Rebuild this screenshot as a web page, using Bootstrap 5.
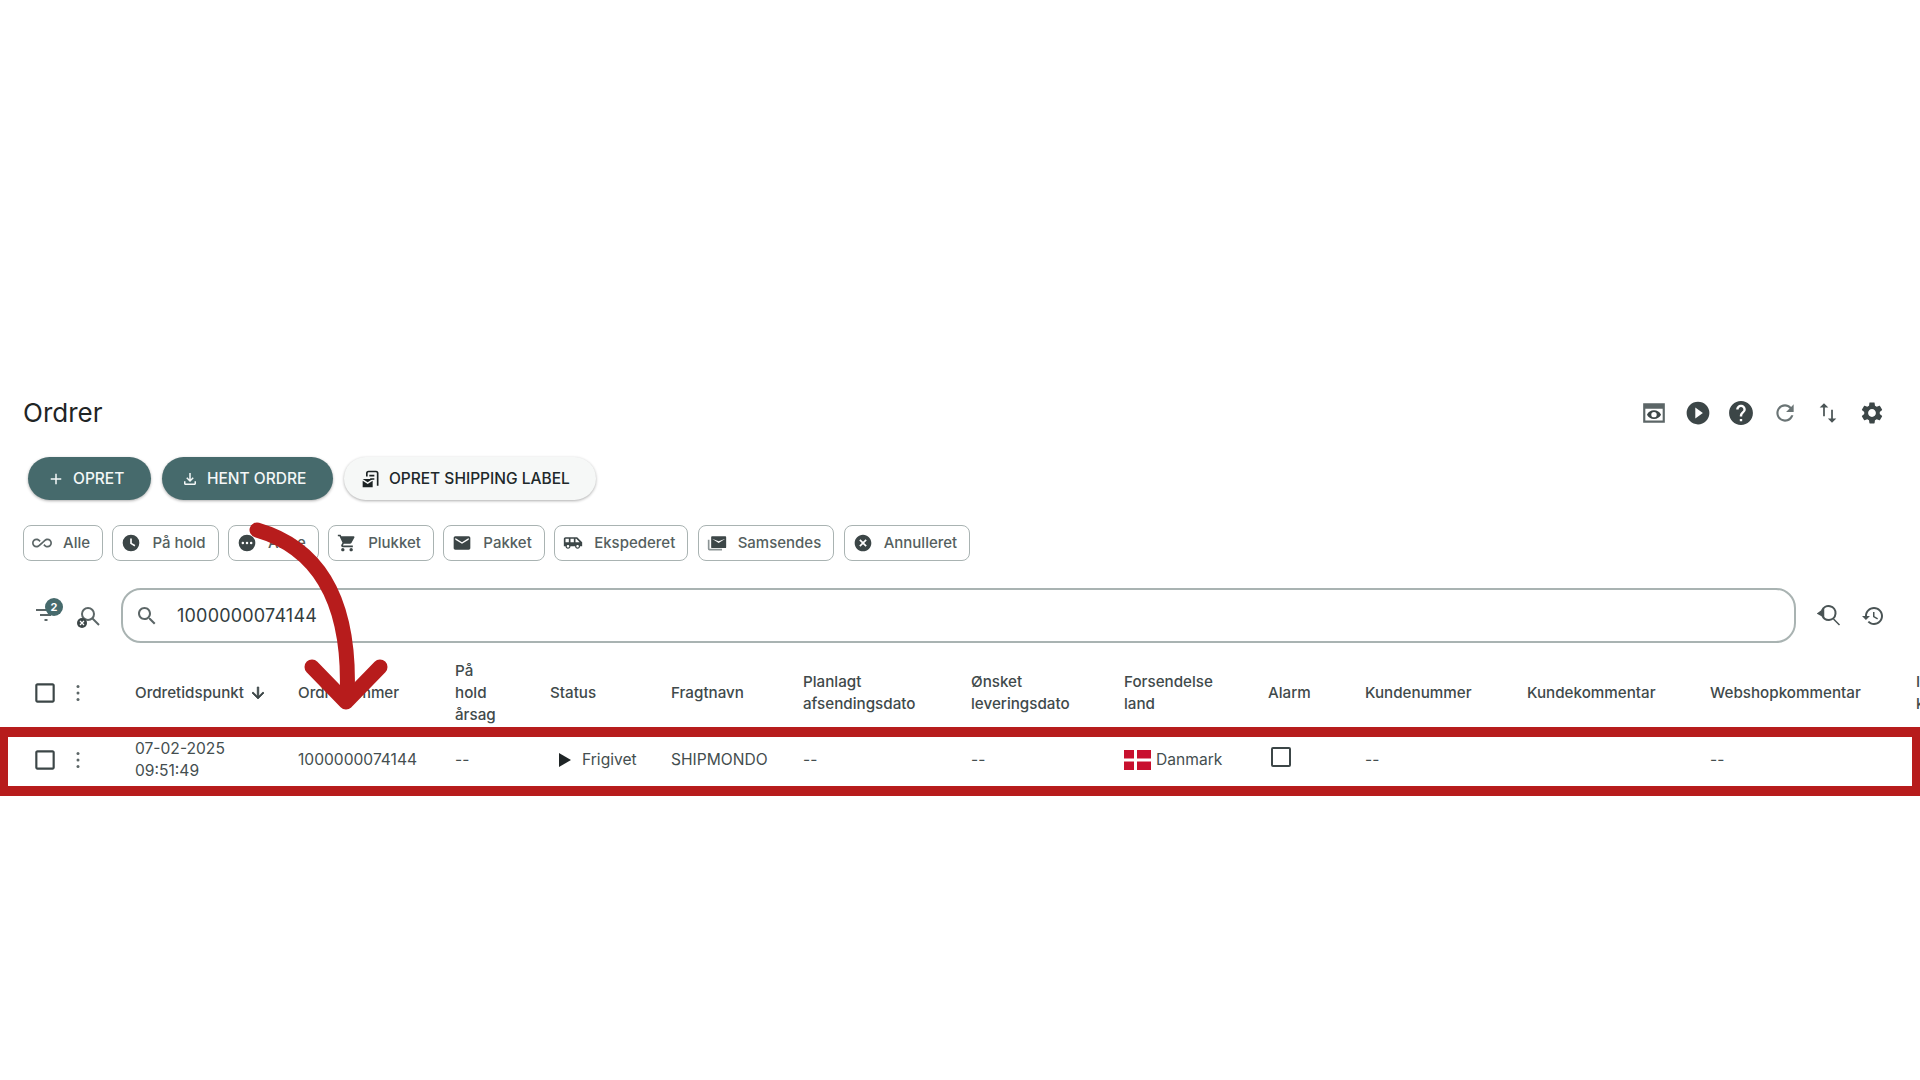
<!DOCTYPE html>
<html lang="da">
<head>
<meta charset="utf-8">
<title>Ordrer</title>
<link href="https://cdn.jsdelivr.net/npm/bootstrap@5.3.0/dist/css/bootstrap.min.css" rel="stylesheet">
<style>
html,body{height:1080px;overflow:hidden;background:#fff}
body{font-family:Inter,"Liberation Sans",sans-serif;font-size:15px;color:#3f4a4b;position:relative}
.ico{display:block;fill:#3c4647;flex:none}
.page-top{height:393px}
.head-row{height:40px;padding:0 35px 0 23px}
.page-title{font-size:26px;font-weight:400;color:#1f2526;margin:0;line-height:40px}
.head-icons{gap:17.6px}
.head-icons .ico{width:26px;height:26px}
.action-row{margin-top:24px;padding-left:28px;gap:10.6px}
.pill{height:43px;border-radius:22px;border:0;font-size:15.5px;font-weight:500;padding:0 27px 0 19px;gap:8px;display:flex;align-items:center;box-shadow:0 1px 3px rgba(0,0,0,.32)}
.pill-teal{background:#466a6c;color:#f4f7f7}
.pill-teal .ico{fill:#f4f7f7}
.pill-light{background:#f6f8f7;color:#20282a;padding:0 26px 0 17px}
.pill-light .ico{fill:#1c2324}
.chip-row{margin-top:25px;padding-left:23px;gap:9.4px}
.chip{height:36px;border:1.5px solid #a9b3b2;border-radius:8px;padding:0 12px 0 8px;gap:11px;display:flex;align-items:center;color:#555f60;font-weight:500;font-size:15px;background:#fff}
.search-row{margin-top:27px;height:55px;padding-left:35px}
.tool-filter{position:relative;width:24px;height:24px;margin-top:-7px}
.count-dot{position:absolute;top:-2px;right:-4px;width:18px;height:18px;border-radius:50%;background:#466a6c;color:#fff;font-size:11px;font-weight:700;line-height:18px;text-align:center}
.tool-clear{margin-left:17px;margin-top:2px}
.search-box{margin-left:21px;width:1675px;height:55px;border:2px solid #a9b3b2;border-radius:20px;padding:0 12px;gap:18px;display:flex;align-items:center;font-size:18px;color:#333d3e;letter-spacing:.2px}
.search-tail{margin-left:21px;gap:20px}
.grid-wrap{position:relative;margin-top:14px;overflow:hidden;width:1920px;height:150px}
.order-grid{table-layout:fixed;width:2040px;border-collapse:collapse;margin:0}
.order-grid th,.order-grid td{padding:0;vertical-align:middle;line-height:22px;border:0;color:#444e4f;background:transparent}
.order-grid th{font-weight:500;font-size:15.2px;height:73px;border-bottom:2px solid #d9dddd;color:#3f4a4b}
.order-grid td{font-size:15.6px;height:58px;padding-top:1px}
.order-grid th:nth-child(n+3),.order-grid td:nth-child(n+3){padding-right:6px}
.check-cell .ico{margin-left:32px;width:26px;height:26px}
.sort-ico{display:inline-block;vertical-align:-4px;margin-left:5px;stroke:#3c4647;stroke-width:1}
.status-val{padding-left:6px;gap:8px}
.flag-dk{width:27px;height:20px;flex:none;display:block}
.flag-val{gap:5px}
.alarm-box{width:20px;height:20px;border:2px solid #3c4647;border-radius:2px;margin:-7px 0 0 3px}
.mark-row{position:absolute;left:0;right:0;top:70px;height:69px;border:10px solid #b71c1c;border-left-width:8px;border-right-width:8px;pointer-events:none}
.mark-arrow{position:absolute;left:0;top:0;pointer-events:none;z-index:5}
.c1{width:66px}.c2{width:69px}.c3{width:163px}.c4{width:157px}.c5{width:95px}.c6{width:121px}.c7{width:132px}.c8{width:168px}.c9{width:153px}.c10{width:144px}.c11{width:97px}.c12{width:162px}.c13{width:183px}.c14{width:206px}.c15{width:124px}
</style>
</head>
<body>
<div class="page-top"></div>

<div class="head-row d-flex align-items-center justify-content-between">
  <h1 class="page-title">Ordrer</h1>
  <div class="head-icons d-flex align-items-center">
    <svg class="ico" viewBox="0 0 24 24"><path d="M2 3h20v18H2zM4 8v11h16V8z" fill-rule="evenodd" fill="#5c6667"/><path d="M12 9.500c-3 0-5.300 1.700-6.500 4 1.200 2.300 3.500 4 6.500 4s5.300-1.700 6.500-4c-1.200-2.300-3.500-4-6.500-4zm0 6.500a2.500 2.500 0 110-5 2.500 2.500 0 010 5z"/></svg>
    <svg class="ico" viewBox="0 0 24 24"><path d="M12 1.500a10.500 10.500 0 100 21 10.500 10.500 0 000-21zm-2.500 15.500V7l7 5-7 5z"/></svg>
    <svg class="ico" viewBox="0 0 24 24"><path transform="translate(-1.200 -1.200) scale(1.100)" d="M12 2C6.480 2 2 6.480 2 12s4.480 10 10 10 10-4.480 10-10S17.520 2 12 2zm1 17h-2v-2h2v2zm2.070-7.750l-.9.920C13.450 12.900 13 13.500 13 15h-2v-.5c0-1.100.45-2.100 1.170-2.830l1.240-1.260c.37-.36.59-.86.59-1.410 0-1.100-.9-2-2-2s-2 .9-2 2H8c0-2.210 1.790-4 4-4s4 1.790 4 4c0 .88-.36 1.680-.93 2.250z"/></svg>
    <svg class="ico" viewBox="0 0 24 24"><path d="M17.650 6.350C16.200 4.900 14.210 4 12 4c-4.420 0-7.990 3.580-7.990 8s3.570 8 7.990 8c3.730 0 6.840-2.550 7.730-6h-2.080c-.82 2.330-3.040 4-5.650 4-3.310 0-6-2.690-6-6s2.690-6 6-6c1.660 0 3.140.69 4.220 1.780L13 11h7V4l-2.350 2.350z" fill="#6a7475"/></svg>
    <svg class="ico" viewBox="0 0 24 24"><path d="M16.500 17.010V9h-1.600v8.010h-3L15.700 21l4-3.990h-3.200zM8.300 3L4.300 6.990h3.200V15h1.600V6.990h3.200L8.300 3z" fill="#4a5455"/></svg>
    <svg class="ico" viewBox="0 0 24 24"><path d="M19.140 12.940c.04-.3.06-.61.06-.94 0-.32-.02-.64-.07-.94l2.030-1.580c.18-.14.23-.41.12-.61l-1.920-3.320c-.12-.22-.37-.29-.59-.22l-2.390.96c-.5-.38-1.030-.7-1.620-.94l-.36-2.540c-.04-.24-.24-.41-.48-.41h-3.840c-.24 0-.43.17-.47.41l-.36 2.540c-.59.24-1.130.57-1.620.94l-2.390-.96c-.22-.08-.47 0-.59.22L2.740 8.870c-.12.21-.08.47.12.61l2.030 1.580c-.05.3-.09.63-.09.94s.02.64.07.94l-2.030 1.580c-.18.14-.23.41-.12.61l1.920 3.320c.12.22.37.29.59.22l2.390-.96c.5.38 1.030.7 1.620.94l.36 2.540c.05.24.24.41.48.41h3.840c.24 0 .44-.17.47-.41l.36-2.540c.59-.24 1.130-.56 1.620-.94l2.390.96c.22.08.47 0 .59-.22l1.920-3.320c.12-.22.07-.47-.12-.61l-2.010-1.580zM12 15.600c-1.980 0-3.600-1.620-3.600-3.600s1.620-3.600 3.600-3.600 3.600 1.620 3.600 3.600-1.620 3.600-3.600 3.600z"/></svg>
  </div>
</div>

<div class="action-row d-flex">
  <button class="pill pill-teal" type="button"><svg class="ico" width="18" height="18" viewBox="0 0 24 24"><path d="M19 13h-6v6h-2v-6H5v-2h6V5h2v6h6v2z"/></svg>OPRET</button>
  <button class="pill pill-teal" type="button"><svg class="ico" width="18" height="18" viewBox="0 0 24 24"><path d="M18 15v3H6v-3H4v3c0 1.100.9 2 2 2h12c1.100 0 2-.9 2-2v-3h-2zm-1-4-1.410-1.410L13 12.170V4h-2v8.170L8.410 9.590 7 11l5 5 5-5z"/></svg>HENT ORDRE</button>
  <button class="pill pill-light" type="button"><svg class="ico" width="20" height="20" viewBox="0 0 24 24"><path d="M9 2h9a3 3 0 013 3v15h-2V5a1 1 0 00-1-1H9a1 1 0 00-1 1v4H6V5a3 3 0 013-3zM10 7h6v2h-6zM11 11h5v2h-5z"/><path d="M2 12h12v10H2zM2 12l6 4 6-4v2l-6 4-6-4z" fill-rule="evenodd"/></svg>OPRET SHIPPING LABEL</button>
</div>

<div class="chip-row d-flex">
  <div class="chip"><svg class="ico" width="20" height="20" viewBox="0 0 24 24"><path fill="#5c6667" d="M18.600 6.620c-1.440 0-2.800.56-3.770 1.530L12 10.660 10.480 12h.01L7.800 14.390c-.64.64-1.490.99-2.400.99-1.870 0-3.390-1.510-3.390-3.380S3.530 8.620 5.400 8.620c.91 0 1.760.35 2.440 1.030l1.130 1 1.510-1.340L9.220 8.200C8.200 7.180 6.840 6.620 5.400 6.620 2.420 6.620 0 9.040 0 12s2.420 5.380 5.400 5.380c1.440 0 2.800-.56 3.770-1.530l2.830-2.500.01.01L13.520 12h-.01l2.690-2.390c.64-.64 1.490-.99 2.400-.99 1.870 0 3.390 1.510 3.390 3.380s-1.520 3.380-3.390 3.380c-.9 0-1.760-.35-2.440-1.030l-1.140-1.010-1.510 1.340 1.270 1.120c1.020 1.010 2.370 1.570 3.820 1.570 2.980 0 5.400-2.410 5.400-5.380s-2.420-5.370-5.400-5.370z"/></svg>Alle</div>
  <div class="chip"><svg class="ico" width="20" height="20" viewBox="0 0 24 24"><path d="M12 2a10 10 0 100 20 10 10 0 000-20zm4.200 14.200L11 13V6.500h2v5.400l4.200 2.600-1 1.700z"/></svg>På hold</div>
  <div class="chip"><svg class="ico" width="20" height="20" viewBox="0 0 24 24"><path d="M12 2a10 10 0 100 20 10 10 0 000-20zM7 13.500a1.500 1.500 0 110-3 1.500 1.500 0 010 3zm5 0a1.500 1.500 0 110-3 1.500 1.500 0 010 3zm5 0a1.500 1.500 0 110-3 1.500 1.500 0 010 3z"/></svg>Åbne</div>
  <div class="chip"><svg class="ico" width="20" height="20" viewBox="0 0 24 24"><path d="M7 18c-1.100 0-1.990.9-1.990 2S5.900 22 7 22s2-.9 2-2-.9-2-2-2zM1 2v2h2l3.600 7.590-1.350 2.450c-.16.28-.25.61-.25.96 0 1.100.9 2 2 2h12v-2H7.420c-.14 0-.25-.11-.25-.25l.03-.12.9-1.630h7.450c.75 0 1.410-.41 1.750-1.030l3.580-6.490c.08-.14.12-.31.12-.48 0-.55-.45-1-1-1H5.210l-.94-2H1zm16 16c-1.100 0-1.990.9-1.990 2s.89 2 1.990 2 2-.9 2-2-.9-2-2-2z"/></svg>Plukket</div>
  <div class="chip"><svg class="ico" width="20" height="20" viewBox="0 0 24 24"><path d="M20 4H4c-1.100 0-1.990.9-1.990 2L2 18c0 1.100.9 2 2 2h16c1.100 0 2-.9 2-2V6c0-1.100-.9-2-2-2zm0 4l-8 5-8-5V6l8 5 8-5v2z"/></svg>Pakket</div>
  <div class="chip"><svg class="ico" width="20" height="20" viewBox="0 0 24 24"><path d="M17 5H3c-1.100 0-2 .89-2 2v9h2c0 1.650 1.340 3 3 3s3-1.350 3-3h5.500c0 1.650 1.340 3 3 3s3-1.350 3-3H23v-5l-6-6zM3 11V7h4v4H3zm3 6.500c-.83 0-1.500-.67-1.500-1.500s.67-1.500 1.500-1.500 1.500.67 1.500 1.500-.67 1.500-1.500 1.500zm7-6.500H9V7h4v4zm4.500 6.500c-.83 0-1.500-.67-1.500-1.500s.67-1.500 1.500-1.500 1.500.67 1.500 1.500-.67 1.500-1.500 1.500zM15 11V7h1l4 4h-5z"/></svg>Ekspederet</div>
  <div class="chip"><svg class="ico" width="20" height="20" viewBox="0 0 24 22"><path fill="#8b9394" d="M1 7h2v11h15v2H3a2 2 0 01-2-2z"/><path d="M6 3h16a1 1 0 011 1v12a1 1 0 01-1 1H6a1 1 0 01-1-1V4a1 1 0 011-1zm16 3l-8 5-8-5v-.1l8 3.100 8-3.100z" fill-rule="evenodd"/></svg>Samsendes</div>
  <div class="chip"><svg class="ico" width="20" height="20" viewBox="0 0 24 24"><path d="M12 2C6.470 2 2 6.470 2 12s4.470 10 10 10 10-4.470 10-10S17.530 2 12 2zm4.500 13.090L15.090 16.500 12 13.410 8.910 16.500 7.500 15.090 10.590 12 7.500 8.910 8.910 7.500 12 10.590l3.090-3.090 1.410 1.410L13.410 12l3.090 3.090z"/></svg>Annulleret</div>
</div>

<div class="search-row d-flex align-items-center">
  <div class="tool-filter"><svg class="ico" width="24" height="24" viewBox="0 0 24 24"><path fill="#5c6667" d="M1 9h18v2H1zM5 14h11v2H5zM9.500 19h3v2h-3z"/></svg><span class="count-dot">2</span></div>
  <svg class="ico tool-clear" width="24" height="24" viewBox="0 0 24 24"><circle cx="12" cy="9" r="6" fill="none" stroke="#5c6667" stroke-width="2"/><path d="M16.500 13.500L23 20" stroke="#5c6667" stroke-width="2" fill="none"/><circle cx="6" cy="18" r="5"/><path d="M4 16l4 4M8 16l-4 4" stroke="#fff" stroke-width="1.200"/></svg>
  <div class="search-box"><svg class="ico" width="24" height="24" viewBox="0 0 24 24"><path fill="#5c6667" d="M15.500 14h-.79l-.28-.27C15.410 12.590 16 11.110 16 9.500 16 5.910 13.090 3 9.500 3S3 5.910 3 9.500 5.910 16 9.500 16c1.610 0 3.090-.59 4.230-1.570l.27.28v.79l5 4.990L20.490 19l-4.990-5zm-6 0C7.010 14 5 11.990 5 9.500S7.010 5 9.500 5 14 7.010 14 9.500 11.990 14 9.500 14z"/></svg>1000000074144</div>
  <div class="search-tail d-flex align-items-center">
    <svg class="ico" width="24" height="24" viewBox="0 0 24 24"><path d="M5 6.500A7 7 0 1112 16a7 7 0 01-6.800-5.300" fill="none" stroke="#4a5455" stroke-width="2"/><path d="M1 9.500l5.500-4v7zM16.500 15l6 6" fill="#4a5455" stroke="#4a5455" stroke-width="1.500"/></svg>
    <svg class="ico" width="24" height="24" viewBox="0 0 24 24"><path fill="#4a5455" d="M13 3c-4.970 0-9 4.030-9 9H1l3.890 3.890.07.14L9 12H6c0-3.870 3.130-7 7-7s7 3.130 7 7-3.130 7-7 7c-1.930 0-3.680-.79-4.940-2.060l-1.420 1.420C8.270 19.990 10.510 21 13 21c4.970 0 9-4.030 9-9s-4.030-9-9-9zm-1 5v5l4.280 2.540.72-1.210-3.500-2.080V8H12z"/></svg>
  </div>
</div>

<div class="grid-wrap">
  <table class="table order-grid">
    <colgroup>
      <col class="c1"><col class="c2"><col class="c3"><col class="c4"><col class="c5"><col class="c6"><col class="c7"><col class="c8"><col class="c9"><col class="c10"><col class="c11"><col class="c12"><col class="c13"><col class="c14"><col class="c15">
    </colgroup>
    <thead>
      <tr>
        <th class="check-cell"><svg class="ico" viewBox="0 0 24 24"><path d="M19 5v14H5V5h14m0-2H5c-1.100 0-2 .9-2 2v14c0 1.100.9 2 2 2h14c1.100 0 2-.9 2-2V5c0-1.100-.9-2-2-2z"/></svg></th>
        <th><svg class="ico" width="24" height="24" viewBox="0 0 24 24"><circle cx="12" cy="5.500" r="1.500" fill="#5c6667"/><circle cx="12" cy="12" r="1.500" fill="#5c6667"/><circle cx="12" cy="18.500" r="1.500" fill="#5c6667"/></svg></th>
        <th>Ordretidspunkt<svg class="sort-ico ico d-inline-block" width="18" height="18" viewBox="0 0 24 24"><path d="M20 12l-1.410-1.410L13 16.170V4h-2v12.170l-5.580-5.590L4 12l8 8 8-8z"/></svg></th>
        <th>Ordrenummer</th>
        <th>På<br>hold<br>årsag</th>
        <th>Status</th>
        <th>Fragtnavn</th>
        <th>Planlagt afsendingsdato</th>
        <th>Ønsket leveringsdato</th>
        <th>Forsendelse<br>land</th>
        <th>Alarm</th>
        <th>Kundenummer</th>
        <th>Kundekommentar</th>
        <th>Webshopkommentar</th>
        <th>Intern kommentar</th>
      </tr>
    </thead>
    <tbody>
      <tr>
        <td class="check-cell"><svg class="ico" viewBox="0 0 24 24"><path d="M19 5v14H5V5h14m0-2H5c-1.100 0-2 .9-2 2v14c0 1.100.9 2 2 2h14c1.100 0 2-.9 2-2V5c0-1.100-.9-2-2-2z"/></svg></td>
        <td><svg class="ico" width="24" height="24" viewBox="0 0 24 24"><circle cx="12" cy="5.500" r="1.500" fill="#5c6667"/><circle cx="12" cy="12" r="1.500" fill="#5c6667"/><circle cx="12" cy="18.500" r="1.500" fill="#5c6667"/></svg></td>
        <td>07-02-2025<br>09:51:49</td>
        <td>1000000074144</td>
        <td>--</td>
        <td><div class="status-val d-flex align-items-center"><svg class="ico" width="18" height="18" viewBox="0 0 18 18"><path fill="#1f2526" d="M3 2l12 7-12 7z"/></svg>Frigivet</div></td>
        <td>SHIPMONDO</td>
        <td>--</td>
        <td>--</td>
        <td><div class="flag-val d-flex align-items-center"><svg class="flag-dk" viewBox="0 0 27 20"><rect width="27" height="20" fill="#c8102e"/><rect x="10" width="3" height="20" fill="#fff"/><rect y="8.500" width="27" height="3" fill="#fff"/></svg>Danmark</div></td>
        <td><div class="alarm-box"></div></td>
        <td>--</td>
        <td></td>
        <td>--</td>
        <td></td>
      </tr>
    </tbody>
  </table>
  <div class="mark-row"></div>
</div>

<svg class="mark-arrow" width="1920" height="1080" viewBox="0 0 1920 1080" aria-hidden="true">
  <path d="M257 530C312 546 352 592 347 698" fill="none" stroke="#b71c1c" stroke-width="15" stroke-linecap="round"/>
  <path d="M312 667L346 702L380 667" fill="none" stroke="#b71c1c" stroke-width="15" stroke-linecap="round" stroke-linejoin="round"/>
</svg>

<script src="https://cdn.jsdelivr.net/npm/bootstrap@5.3.0/dist/js/bootstrap.bundle.min.js"></script>
</body>
</html>
